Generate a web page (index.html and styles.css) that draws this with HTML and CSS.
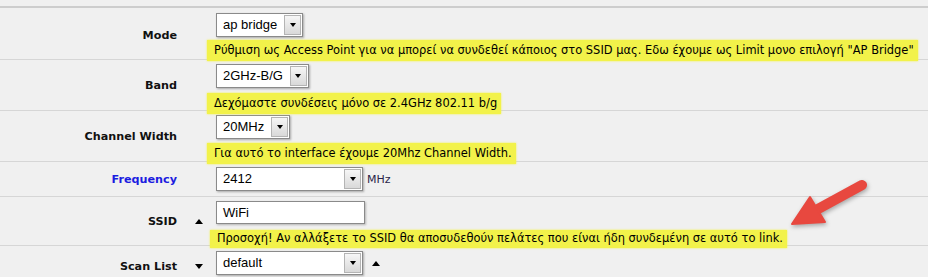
FILE: index.html
```html
<!DOCTYPE html>
<html>
	<head>
		<meta charset="utf-8">
		<title>Wireless - Interface settings</title>
		<link rel="stylesheet" href="styles.css">
	</head>
	<body>
		<div id=Form>

			<div class="Row RowMode">
				<div class="Label">Mode</div>
				<div class="Marker"></div>
				<div class="Value">
					<div class="Select"><span class="Text">ap bridge</span><span class="Button"></span></div>
					<div class="Hint">Ρύθμιση ως Access Point για να μπορεί να συνδεθεί κάποιος στο SSID μας. Εδω έχουμε ως Limit μονο επιλογή "AP Bridge"</div>
				</div>
			</div>

			<div class="Row RowBand">
				<div class="Label">Band</div>
				<div class="Marker"></div>
				<div class="Value">
					<div class="Select"><span class="Text">2GHz-B/G</span><span class="Button"></span></div>
					<div class="Hint">Δεχόμαστε συνδέσεις μόνο σε 2.4GHz 802.11 b/g</div>
				</div>
			</div>

			<div class="Row RowWidth">
				<div class="Label">Channel Width</div>
				<div class="Marker"></div>
				<div class="Value">
					<div class="Select"><span class="Text">20MHz</span><span class="Button"></span></div>
					<div class="Hint">Για αυτό το interface έχουμε 20Mhz Channel Width.</div>
				</div>
			</div>

			<div class="Row RowFrequency">
				<div class="Label Link">Frequency</div>
				<div class="Marker"></div>
				<div class="Value">
					<div class="Inline">
						<div class="Select Wide"><span class="Text">2412</span><span class="Button"></span></div>
						<span class="Unit">MHz</span>
					</div>
				</div>
			</div>

			<div class="Row RowSsid">
				<div class="Label">SSID</div>
				<div class="Marker"><span class="Tri Up"></span></div>
				<div class="Value">
					<div class="Input">WiFi</div>
					<div class="Hint">Προσοχή! Αν αλλάξετε το SSID θα αποσυδεθούν πελάτες που είναι ήδη συνδεμένη σε αυτό το link.</div>
				</div>
			</div>

			<div class="Row RowScan">
				<div class="Label">Scan List</div>
				<div class="Marker"><span class="Tri Down"></span></div>
				<div class="Value">
					<div class="Inline">
						<div class="Select Wide"><span class="Text">default</span><span class="Button"></span></div>
						<span class="Tri Up After"></span>
					</div>
				</div>
			</div>

			<!-- annotation arrow drawn over the screenshot -->
			<svg class="Arrow" width="100" height="60" viewBox="0 0 100 60">
				<g fill="#e8483f" stroke="#e8483f">
					<line x1="82" y1="15" x2="38" y2="39" stroke-width="10" stroke-linecap="round"/>
					<polygon points="12,54 30,27 45,52" stroke-width="2" stroke-linejoin="round"/>
				</g>
			</svg>
		</div>
	</body>
</html>
```
FILE: styles.css
```css
:root
{
	--page: #f0f0f0;
	--line: #d6d6d6;
	--highlight: #f2f24a;
	--link: #1c1ce0;
}

html
{
	background: var(--page);
	font-family: "DejaVu Sans", Verdana, sans-serif;
	font-size: 11px;
	color: #000;
}

body
{
	margin: 0px;
}

#Form
{
	position: relative;	/* arrow sits over the rows */
	margin-top: 6px;
	border-top: 2px solid #cdcdcd;
}

.Row
{
	display: flex;
	align-items: center;
	border-bottom: 1px solid var(--line);
	box-sizing: border-box;
}

.RowMode		{	height: 52px;	}
.RowBand		{	height: 51px;	}
.RowWidth		{	height: 51px;	}
.RowFrequency	{	height: 35px;	}
.RowSsid		{	height: 49px;	}
.RowScan		{	height: 40px;	border-bottom: none;	}

.Label
{
	width: 177px;
	flex: none;
	text-align: right;
	font-weight: bold;
	font-size: 11.2px;
	color: #111;
}

.RowMode .Label	{	margin-top: 3px;	}

.Label.Link
{
	color: var(--link);
}

.Marker
{
	width: 21px;
	flex: none;
	padding-left: 18px;
	display: flex;
	align-items: center;
}

.Value
{
	align-self: flex-start;
	display: flex;
	flex-direction: column;
	align-items: flex-start;
	padding-top: 5px;
}

.RowBand .Value,
.RowWidth .Value,
.RowSsid .Value
{
	padding-top: 4px;
}

.Inline
{
	display: flex;
	align-items: center;
}

/* old style drop-down box */
.Select
{
	display: flex;
	height: 24px;
	box-sizing: border-box;
	border: 1px solid #8a8a8a;
	background: #fff;
	box-shadow: 1px 1px 2px rgba(0,0,0,0.3);
	font-family: "Liberation Sans", Arial, sans-serif;
	font-size: 13px;
}

.Select .Text
{
	flex: 1;
	padding: 0px 6px;
	line-height: 22px;
}

.Select .Button
{
	width: 15px;
	flex: none;
	margin: 1px;
	border: 1px solid #b4b4b4;
	background: linear-gradient( #f6f6f6, #d9d9d9 );
	display: flex;
	align-items: center;
	justify-content: center;
}

.Select .Button:after
{
	content: "";
	border-top: 4px solid #000;
	border-left: 3.5px solid transparent;
	border-right: 3.5px solid transparent;
}

.Select.Wide
{
	width: 147px;
}

.Input
{
	width: 149px;
	height: 23px;
	box-sizing: border-box;
	border: 1px solid #8a8a8a;
	background: #fff;
	box-shadow: 1px 1px 2px rgba(0,0,0,0.25);
	padding: 0px 6px;
	line-height: 21px;
	font-family: "Liberation Sans", Arial, sans-serif;
	font-size: 13px;
}

.Unit
{
	margin-left: 4px;
	color: #2a1f48;
}

/* highlighter marks over the help text */
.Hint
{
	margin: 3px 0px 0px -9px;
	padding: 3px 4px 3px 7px;
	line-height: 15px;
	font-size: 11.45px;
	background: var(--highlight);
	box-shadow: 0px 0px 2px var(--highlight);
	white-space: nowrap;
	position: relative;
	z-index: 1;
}

.RowBand .Hint	{	margin-top: 5px;	}
.RowWidth .Hint	{	margin-top: 4px;	}
.RowSsid .Hint	{	margin-top: 6px;	padding-top: 1px;	padding-bottom: 2px;	margin-left: -6px;	}

.Tri
{
	width: 0px;
	height: 0px;
	border-left: 4.5px solid transparent;
	border-right: 4.5px solid transparent;
}

.Tri.Up		{	border-bottom: 5px solid #000;	}
.Tri.Down	{	border-top: 5px solid #000;	}
.Tri.After	{	margin-left: 9px;	}

.Arrow
{
	position: absolute;
	left: 780px;
	top: 162px;
	filter: drop-shadow( 1px 2px 2px rgba(0,0,0,0.3) );
	z-index: 2;
}
```
